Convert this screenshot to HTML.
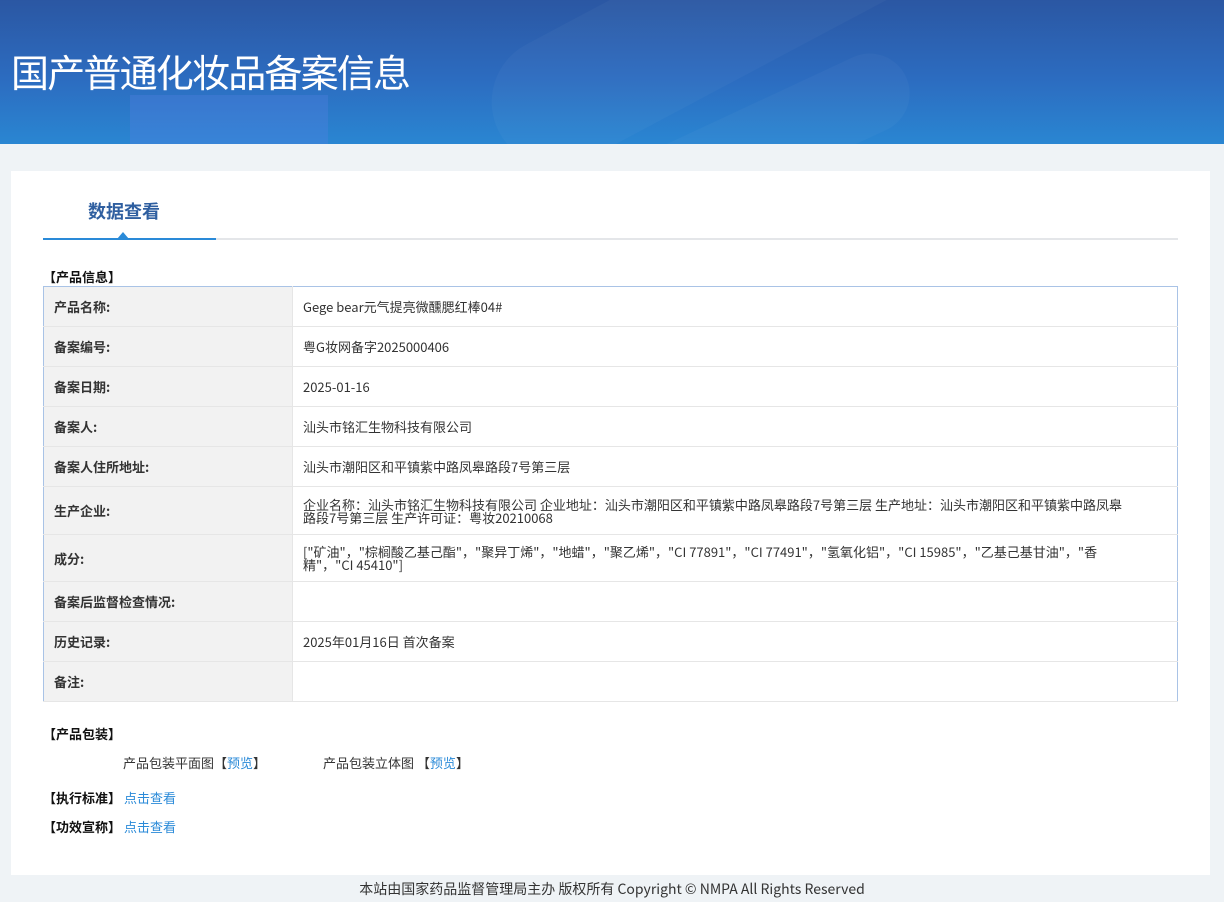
<!DOCTYPE html>
<html><head><meta charset="utf-8"><style>
body{margin:0;width:1224px;height:902px;background:#eff3f6;font-family:"Noto Sans CJK SC","Liberation Sans",sans-serif;font-size:13px;color:#333;position:relative;overflow:hidden}
.hd{position:absolute;left:0;top:0;width:1224px;height:144px;background:linear-gradient(180deg,#2b57a3 0%,#2c6cc0 55%,#2a86d2 100%);overflow:hidden}
.hd h1{position:absolute;left:11px;top:46px;margin:0;font-weight:normal;color:#fff;font-size:38px;font-family:"Noto Sans CJK SC",sans-serif;line-height:50px;letter-spacing:-1.8px}
.card{position:absolute;left:11px;top:171px;width:1199px;height:704px;background:#fff}
.tab{position:absolute;left:77px;top:27px;font-size:18px;font-weight:bold;color:#2f5fa0}
.ln{position:absolute;left:32px;top:67px;width:1135px;height:2px;background:#e4e6e9}
.ln b{position:absolute;left:0;top:0;width:173px;height:2px;background:#2a8ad8}
.tri{position:absolute;left:106px;top:61px;width:0;height:0;border-left:6px solid transparent;border-right:6px solid transparent;border-bottom:7px solid #2a8ad8}
.sec{position:absolute;font-weight:bold;color:#111;font-size:13px}
table{position:absolute;left:32px;top:115px;width:1135px;border-collapse:collapse;border:1px solid #a9c3e6}
td{border-bottom:1px solid #e6e6e6;padding:0 10px;height:39px;line-height:13px;vertical-align:middle}
td.l{width:228px;background:#f2f2f2;font-weight:bold;color:#333;border-right:1px solid #e6e6e6}
a{color:#2a8ad8;text-decoration:none}
.ft{position:absolute;top:879px;left:0;width:1224px;text-align:center;font-size:14px;color:#333}
</style></head><body>
<div class="hd">
<div style="position:absolute;left:470px;top:-50px;width:500px;height:130px;border-radius:65px;background:rgba(255,255,255,.03);transform:rotate(-28deg)"></div>
<div style="position:absolute;left:130px;top:95px;width:198px;height:60px;background:rgba(90,130,230,.3)"></div>
<div style="position:absolute;left:620px;top:100px;width:300px;height:80px;border-radius:40px;background:rgba(255,255,255,.03);transform:rotate(-25deg)"></div>
<h1>国产普通化妆品备案信息</h1></div>
<div class="card">
<div class="tab">数据查看</div>
<div class="ln"><b></b></div><div class="tri"></div>
<div class="sec" style="left:32px;top:96px">【产品信息】</div>
<table>
<tr><td class="l">产品名称:</td><td>Gege bear元气提亮微醺腮红棒04#</td></tr>
<tr><td class="l">备案编号:</td><td>粤G妆网备字2025000406</td></tr>
<tr><td class="l">备案日期:</td><td>2025-01-16</td></tr>
<tr><td class="l">备案人:</td><td>汕头市铭汇生物科技有限公司</td></tr>
<tr><td class="l">备案人住所地址:</td><td>汕头市潮阳区和平镇紫中路凤皋路段7号第三层</td></tr>
<tr><td class="l" style="height:47px">生产企业:</td><td style="padding-right:50px">企业名称：汕头市铭汇生物科技有限公司 企业地址：汕头市潮阳区和平镇紫中路凤皋路段7号第三层 生产地址：汕头市潮阳区和平镇紫中路凤皋路段7号第三层 生产许可证：粤妆20210068</td></tr>
<tr><td class="l" style="height:46px">成分:</td><td style="padding-right:50px">["矿油"，"棕榈酸乙基己酯"，"聚异丁烯"，"地蜡"，"聚乙烯"，"CI 77891"，"CI 77491"，"氢氧化铝"，"CI 15985"，"乙基己基甘油"，"香精"，"CI 45410"]</td></tr>
<tr><td class="l">备案后监督检查情况:</td><td></td></tr>
<tr><td class="l">历史记录:</td><td>2025年01月16日 首次备案</td></tr>
<tr><td class="l">备注:</td><td></td></tr>
</table>
<div class="sec" style="left:32px;top:553px">【产品包装】</div>
<div style="position:absolute;left:112px;top:582px">产品包装平面图【<a>预览</a>】</div>
<div style="position:absolute;left:312px;top:582px">产品包装立体图 【<a>预览</a>】</div>
<div style="position:absolute;left:32px;top:617px"><b style="color:#111">【执行标准】</b> <a>点击查看</a></div>
<div style="position:absolute;left:32px;top:646px"><b style="color:#111">【功效宣称】</b> <a>点击查看</a></div>
</div>
<div class="ft">本站由国家药品监督管理局主办 版权所有 Copyright © NMPA All Rights Reserved</div>
</body></html>
